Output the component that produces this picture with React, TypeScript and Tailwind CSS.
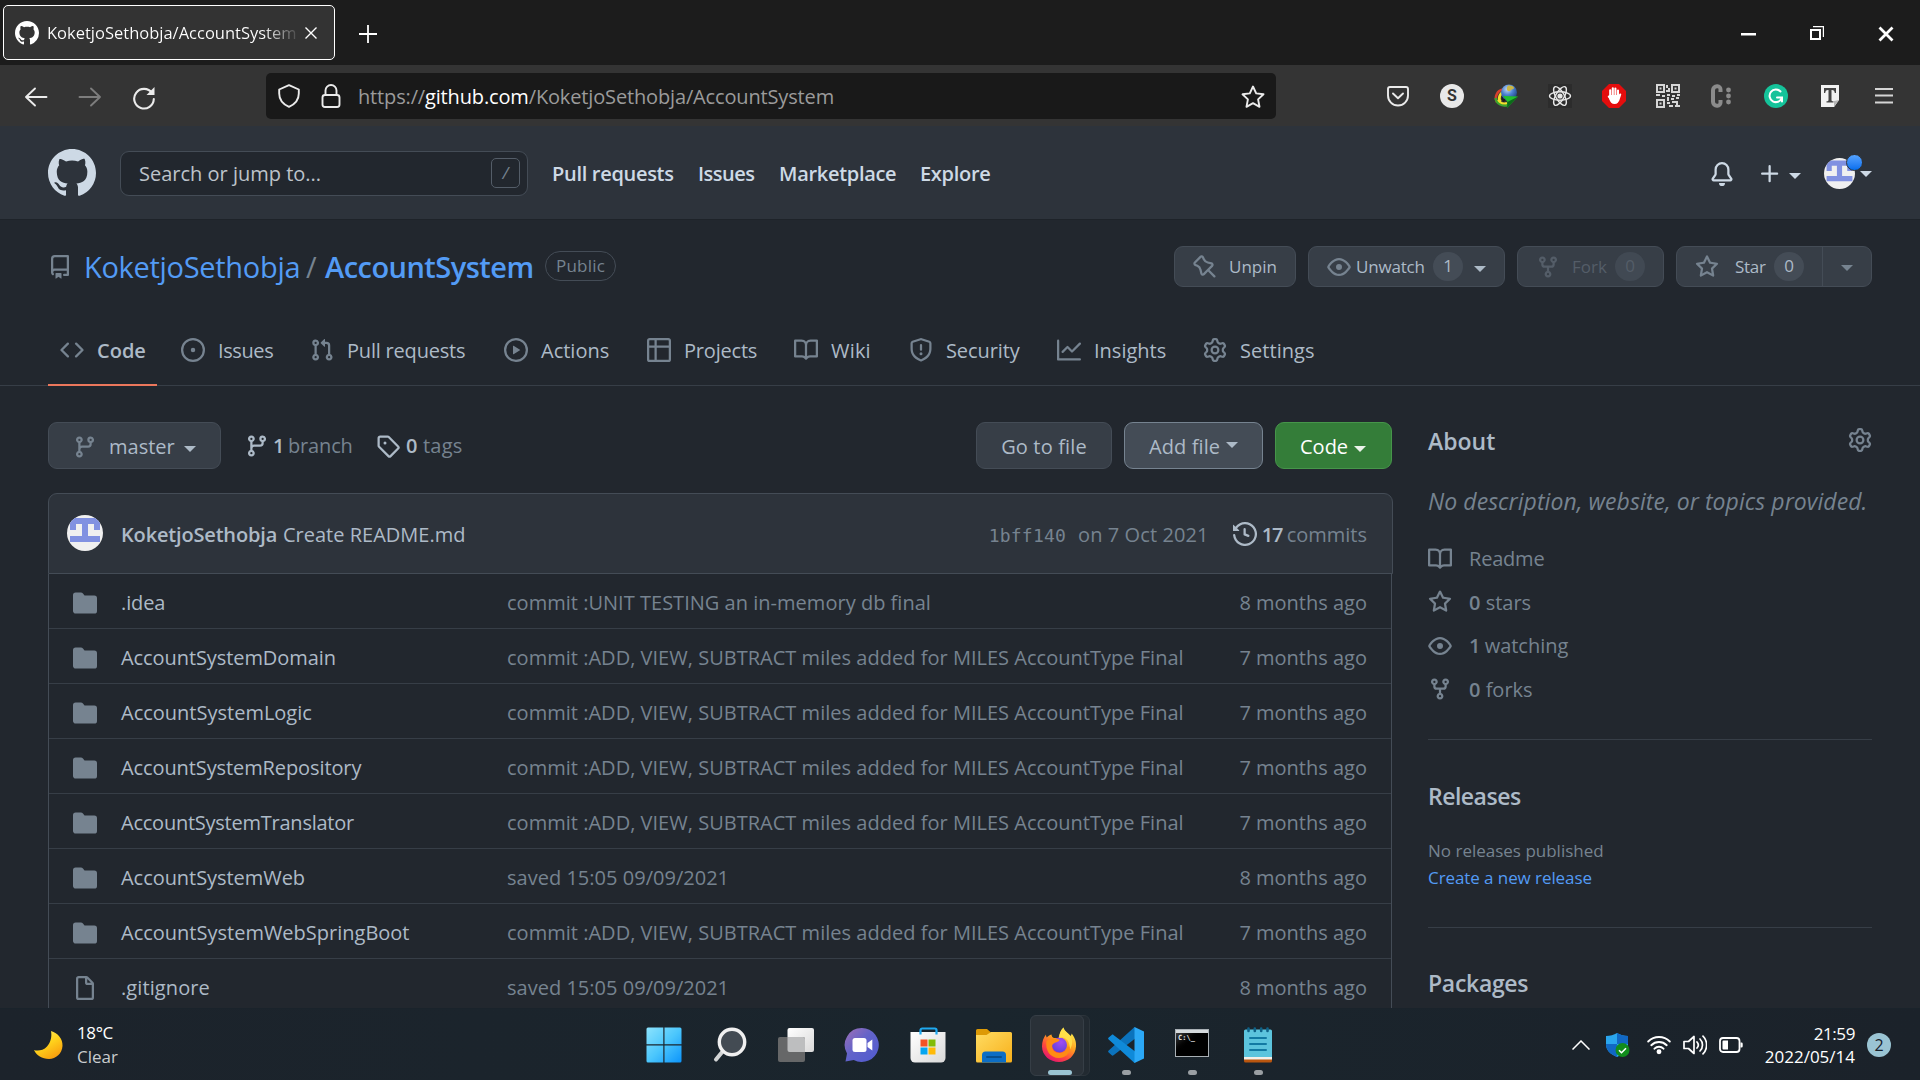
import type { ReactNode } from 'react'

const ICONS = {
  github:
    'M8 0C3.58 0 0 3.58 0 8c0 3.54 2.29 6.53 5.47 7.59.4.07.55-.17.55-.38 0-.19-.01-.82-.01-1.49-2.01.37-2.53-.49-2.69-.94-.09-.23-.48-.94-.82-1.13-.28-.15-.68-.52-.01-.53.63-.01 1.08.58 1.23.82.72 1.21 1.87.87 2.33.66.07-.52.28-.87.51-1.07-1.78-.2-3.64-.89-3.64-3.95 0-.87.31-1.59.82-2.15-.08-.2-.36-1.02.08-2.12 0 0 .67-.21 2.2.82.64-.18 1.32-.27 2-.27.68 0 1.36.09 2 .27 1.53-1.04 2.2-.82 2.2-.82.44 1.1.16 1.92.08 2.12.51.56.82 1.27.82 2.15 0 3.07-1.87 3.75-3.65 3.95.29.25.54.73.54 1.48 0 1.07-.01 1.93-.01 2.2 0 .21.15.46.55.38A8.013 8.013 0 0016 8c0-4.42-3.58-8-8-8z',
  repo: 'M2 2.5A2.5 2.5 0 014.5 0h8.75a.75.75 0 01.75.75v12.5a.75.75 0 01-.75.75h-2.5a.75.75 0 110-1.5h1.75v-2h-8a1 1 0 00-.714 1.7.75.75 0 01-1.072 1.05A2.495 2.495 0 012 11.5v-9zm10.5-1V9h-8c-.356 0-.694.074-1 .208V2.5a1 1 0 011-1h8zM5 12.25v3.25a.25.25 0 00.4.2l1.45-1.087a.25.25 0 01.3 0L8.6 15.7a.25.25 0 00.4-.2v-3.25a.25.25 0 00-.25-.25h-3.5a.25.25 0 00-.25.25z',
  pin: 'M4.456.734a1.75 1.75 0 012.826.504l.613 1.327a3.081 3.081 0 002.084 1.707l2.454.584c1.332.317 1.8 1.972.832 2.94L11.06 10l3.72 3.72a.75.75 0 11-1.061 1.06L10 11.06l-2.204 2.205c-.968.968-2.623.5-2.94-.832l-.584-2.454a3.081 3.081 0 00-1.707-2.084l-1.327-.613a1.75 1.75 0 01-.504-2.826L4.456.734zM5.92 1.866a.25.25 0 00-.404-.072L1.794 5.516a.25.25 0 00.072.404l1.328.613A4.582 4.582 0 015.73 9.63l.584 2.454a.25.25 0 00.42.12l5.47-5.47a.25.25 0 00-.12-.42L9.63 5.73a4.581 4.581 0 01-3.098-2.537L5.92 1.866z',
  eye: 'M1.679 7.932c.412-.621 1.242-1.75 2.366-2.717C5.175 4.242 6.527 3.5 8 3.5c1.473 0 2.824.742 3.955 1.715 1.124.967 1.954 2.096 2.366 2.717a.119.119 0 010 .136c-.412.621-1.242 1.75-2.366 2.717C10.825 11.758 9.473 12.5 8 12.5c-1.473 0-2.824-.742-3.955-1.715C2.92 9.818 2.09 8.69 1.679 8.068a.119.119 0 010-.136zM8 2c-1.981 0-3.67.992-4.933 2.078C1.797 5.169.88 6.423.43 7.1a1.619 1.619 0 000 1.798c.45.678 1.367 1.932 2.637 3.024C4.329 13.008 6.019 14 8 14c1.981 0 3.67-.992 4.933-2.078 1.27-1.091 2.187-2.345 2.637-3.023a1.619 1.619 0 000-1.798c-.45-.678-1.367-1.932-2.637-3.023C11.671 2.992 9.981 2 8 2zm0 8a2 2 0 100-4 2 2 0 000 4z',
  fork: 'M5 3.25a.75.75 0 11-1.5 0 .75.75 0 011.5 0zm0 2.122a2.25 2.25 0 10-1.5 0v.878A2.25 2.25 0 005.75 8.5h1.5v2.128a2.251 2.251 0 101.5 0V8.5h1.5a2.25 2.25 0 002.25-2.25v-.878a2.25 2.25 0 10-1.5 0v.878a.75.75 0 01-.75.75h-4.5A.75.75 0 015 6.25v-.878zm3.75 7.378a.75.75 0 11-1.5 0 .75.75 0 011.5 0zm3-8.75a.75.75 0 100-1.5.75.75 0 000 1.5z',
  star: 'M8 .25a.75.75 0 01.673.418l1.882 3.815 4.21.612a.75.75 0 01.416 1.279l-3.046 2.97.719 4.192a.75.75 0 01-1.088.791L8 12.347l-3.766 1.98a.75.75 0 01-1.088-.79l.72-4.194L.818 6.374a.75.75 0 01.416-1.28l4.21-.611L7.327.668A.75.75 0 018 .25zm0 2.445L6.615 5.5a.75.75 0 01-.564.41l-3.097.45 2.24 2.184a.75.75 0 01.216.664l-.528 3.084 2.769-1.456a.75.75 0 01.698 0l2.77 1.456-.53-3.084a.75.75 0 01.216-.664l2.24-2.183-3.096-.45a.75.75 0 01-.564-.41L8 2.694v.001z',
  code: 'M4.72 3.22a.75.75 0 011.06 1.06L2.06 8l3.72 3.72a.75.75 0 11-1.06 1.06L.47 8.53a.75.75 0 010-1.06l4.25-4.25zm6.56 0a.75.75 0 10-1.06 1.06L13.94 8l-3.72 3.72a.75.75 0 101.06 1.06l4.25-4.25a.75.75 0 000-1.06l-4.25-4.25z',
  issue:
    'M8 9.5a1.5 1.5 0 100-3 1.5 1.5 0 000 3zM8 0a8 8 0 100 16A8 8 0 008 0zM1.5 8a6.5 6.5 0 1113 0 6.5 6.5 0 01-13 0z',
  pull: 'M7.177 3.073L9.573.677A.25.25 0 0110 .854v4.792a.25.25 0 01-.427.177L7.177 3.427a.25.25 0 010-.354zM3.75 2.5a.75.75 0 100 1.5.75.75 0 000-1.5zm-2.25.75a2.25 2.25 0 113 2.122v5.256a2.251 2.251 0 11-1.5 0V5.372A2.25 2.25 0 011.5 3.25zM11 2.5h-1V4h1a1 1 0 011 1v5.628a2.251 2.251 0 101.5 0V5A2.5 2.5 0 0011 2.5zm1 10.25a.75.75 0 111.5 0 .75.75 0 01-1.5 0zM3.75 12a.75.75 0 100 1.5.75.75 0 000-1.5z',
  play: 'M1.5 8a6.5 6.5 0 1113 0 6.5 6.5 0 01-13 0zM8 0a8 8 0 100 16A8 8 0 008 0zM6.379 5.227A.25.25 0 006 5.442v5.117a.25.25 0 00.379.214l4.264-2.559a.25.25 0 000-.428L6.379 5.227z',
  table:
    'M0 1.75C0 .784.784 0 1.75 0h12.5C15.216 0 16 .784 16 1.75v12.5A1.75 1.75 0 0114.25 16H1.75A1.75 1.75 0 010 14.25V1.75zM6.5 6.5v8h7.75a.25.25 0 00.25-.25V6.5h-8zm8-1.5V1.75a.25.25 0 00-.25-.25H6.5V5h8zm-13 1.5v7.75c0 .138.112.25.25.25H5v-8H1.5zM5 5V1.5H1.75a.25.25 0 00-.25.25V5H5z',
  book: 'M0 1.75A.75.75 0 01.75 1h4.253c1.227 0 2.317.59 3 1.501A3.744 3.744 0 0111.006 1h4.245a.75.75 0 01.75.75v10.5a.75.75 0 01-.75.75h-4.507a2.25 2.25 0 00-1.591.659l-.622.621a.75.75 0 01-1.06 0l-.622-.621A2.25 2.25 0 005.258 13H.75a.75.75 0 01-.75-.75V1.75zm8.755 3a2.25 2.25 0 012.25-2.25H14.5v9h-3.757c-.71 0-1.4.201-1.992.572l.004-7.322zm-1.504 7.324l.004-5.073-.002-2.253A2.25 2.25 0 005.003 2.5H1.5v9h3.757a3.75 3.75 0 011.994.574z',
  shield:
    'M7.467.133a1.75 1.75 0 011.066 0l5.25 1.68A1.75 1.75 0 0115 3.48V7c0 1.566-.32 3.182-1.303 4.682-.983 1.498-2.585 2.813-5.032 3.855a1.7 1.7 0 01-1.33 0c-2.447-1.042-4.049-2.357-5.032-3.855C1.32 10.182 1 8.566 1 7V3.48a1.75 1.75 0 011.217-1.667l5.25-1.68zm.61 1.429a.25.25 0 00-.153 0l-5.25 1.68a.25.25 0 00-.174.238V7c0 1.358.275 2.666 1.057 3.86.784 1.194 2.121 2.34 4.366 3.297a.2.2 0 00.154 0c2.245-.956 3.582-2.104 4.366-3.298C13.225 9.666 13.5 8.36 13.5 7V3.48a.25.25 0 00-.174-.237l-5.25-1.68zM9 10.5a1 1 0 11-2 0 1 1 0 012 0zm-.25-5.75a.75.75 0 10-1.5 0v3a.75.75 0 001.5 0v-3z',
  graph:
    'M1.5 1.75a.75.75 0 00-1.5 0v12.5c0 .414.336.75.75.75h14.5a.75.75 0 000-1.5H1.5V1.75zm14.28 2.53a.75.75 0 00-1.06-1.06L10 7.94 7.53 5.47a.75.75 0 00-1.06 0L3.22 8.72a.75.75 0 001.06 1.06L7 7.06l2.47 2.47a.75.75 0 001.06 0l5.25-5.25z',
  gear: 'M7.429 1.525a6.593 6.593 0 011.142 0c.036.003.108.036.137.146l.289 1.105c.147.56.55.967.997 1.189.174.086.341.183.501.29.417.278.97.423 1.53.27l1.102-.303c.11-.03.175.016.195.046.219.31.41.641.573.989.014.031.022.11-.059.19l-.815.806c-.411.406-.562.957-.53 1.456a4.588 4.588 0 010 .582c-.032.499.119 1.05.53 1.456l.815.806c.08.08.073.159.059.19a6.494 6.494 0 01-.573.99c-.02.029-.086.074-.195.045l-1.103-.303c-.559-.153-1.112-.008-1.529.27-.16.107-.327.204-.5.29-.449.222-.851.628-.998 1.189l-.289 1.105c-.029.11-.101.143-.137.146a6.613 6.613 0 01-1.142 0c-.036-.003-.108-.037-.137-.146l-.289-1.105c-.147-.56-.55-.967-.997-1.189a4.502 4.502 0 01-.501-.29c-.417-.278-.97-.423-1.53-.27l-1.102.303c-.11.03-.175-.016-.195-.046a6.492 6.492 0 01-.573-.989c-.014-.031-.022-.11.059-.19l.815-.806c.411-.406.562-.957.53-1.456a4.587 4.587 0 010-.582c.032-.499-.119-1.05-.53-1.456l-.815-.806c-.08-.08-.073-.159-.059-.19a6.44 6.44 0 01.573-.99c.02-.029.086-.075.195-.045l1.103.303c.559.153 1.112.008 1.529-.27.16-.107.327-.204.5-.29.449-.222.851-.628.998-1.189l.289-1.105c.029-.11.101-.143.137-.146zM8 0c-.236 0-.47.01-.701.03-.743.065-1.29.615-1.458 1.261l-.29 1.106c-.017.066-.078.158-.211.224a5.994 5.994 0 00-.668.386c-.123.082-.233.09-.3.071L3.27 2.776c-.644-.177-1.392.02-1.82.63a7.977 7.977 0 00-.704 1.217c-.315.675-.111 1.422.363 1.891l.815.806c.05.048.098.147.088.294a6.084 6.084 0 000 .772c.01.147-.038.246-.088.294l-.815.806c-.474.469-.678 1.216-.363 1.891.2.428.436.835.704 1.218.428.609 1.176.806 1.82.63l1.103-.303c.066-.019.176-.011.299.071.213.143.436.272.668.386.133.066.194.158.212.224l.289 1.106c.169.646.715 1.196 1.458 1.26a8.094 8.094 0 001.402 0c.743-.064 1.29-.614 1.458-1.26l.29-1.106c.017-.066.078-.158.211-.224a5.98 5.98 0 00.668-.386c.123-.082.233-.09.3-.071l1.102.302c.644.177 1.392-.02 1.82-.63.268-.382.505-.789.704-1.217.315-.675.111-1.422-.364-1.891l-.814-.806c-.05-.048-.098-.147-.088-.294a6.1 6.1 0 000-.772c-.01-.147.039-.246.088-.294l.814-.806c.475-.469.679-1.216.364-1.891a7.992 7.992 0 00-.704-1.218c-.428-.609-1.176-.806-1.82-.63l-1.103.303c-.066.019-.176.011-.299-.071a5.991 5.991 0 00-.668-.386c-.133-.066-.194-.158-.212-.224L10.16 1.29C9.99.645 9.444.095 8.701.031A8.094 8.094 0 008 0zm1.5 8a1.5 1.5 0 11-3 0 1.5 1.5 0 013 0zM11 8a3 3 0 11-6 0 3 3 0 016 0z',
  branch:
    'M11.75 2.5a.75.75 0 100 1.5.75.75 0 000-1.5zm-2.25.75a2.25 2.25 0 113 2.122V6A2.5 2.5 0 0110 8.5H6a1 1 0 00-1 1v1.128a2.251 2.251 0 11-1.5 0V5.372a2.25 2.25 0 111.5 0v1.836A2.492 2.492 0 016 7h4a1 1 0 001-1v-.628A2.25 2.25 0 019.5 3.25zM4.25 12a.75.75 0 100 1.5.75.75 0 000-1.5zM3.5 3.25a.75.75 0 111.5 0 .75.75 0 01-1.5 0z',
  tag: 'M2.5 7.775V2.75a.25.25 0 01.25-.25h5.025a.25.25 0 01.177.073l6.25 6.25a.25.25 0 010 .354l-5.025 5.025a.25.25 0 01-.354 0l-6.25-6.25a.25.25 0 01-.073-.177zm-1.5 0V2.75C1 1.784 1.784 1 2.75 1h5.025c.464 0 .91.184 1.238.513l6.25 6.25a1.75 1.75 0 010 2.474l-5.026 5.026a1.75 1.75 0 01-2.474 0l-6.25-6.25A1.75 1.75 0 011 7.775zM6 5a1 1 0 100 2 1 1 0 000-2z',
  history:
    'M1.643 3.143L.427 1.927A.25.25 0 000 2.104V5.75c0 .138.112.25.25.25h3.646a.25.25 0 00.177-.427L2.715 4.215a6.5 6.5 0 11-1.18 4.458.75.75 0 10-1.493.154 8.001 8.001 0 101.6-5.684zM7.75 4a.75.75 0 01.75.75v2.992l2.028.812a.75.75 0 01-.557 1.392l-2.5-1A.75.75 0 017 8.25v-3.5A.75.75 0 017.75 4z',
  folder:
    'M1.75 1A1.75 1.75 0 000 2.75v10.5C0 14.216.784 15 1.75 15h12.5A1.75 1.75 0 0016 13.25v-8.5A1.75 1.75 0 0014.25 3h-6.5a.25.25 0 01-.2-.1l-.9-1.2c-.33-.44-.85-.7-1.4-.7h-3.5z',
  file: 'M3.75 1.5a.25.25 0 00-.25.25v12.5c0 .138.112.25.25.25h8.5a.25.25 0 00.25-.25V6H9.75A1.75 1.75 0 018 4.25V1.5H3.75zm5.75.56v2.19c0 .138.112.25.25.25h2.19L9.5 2.06zM2 1.75C2 .784 2.784 0 3.75 0h5.086c.464 0 .909.184 1.237.513l3.414 3.414c.329.328.513.773.513 1.237v9.086A1.75 1.75 0 0112.25 16h-8.5A1.75 1.75 0 012 14.25V1.75z',
  bell: 'M8 16a2 2 0 001.985-1.75c.017-.137-.097-.25-.235-.25h-3.5c-.138 0-.252.113-.235.25A2 2 0 008 16zM8 1.5A3.5 3.5 0 004.5 5v2.947c0 .346-.102.683-.294.97l-1.703 2.556a.018.018 0 00-.003.01l.001.006c0 .002.002.004.004.006a.017.017 0 00.006.004l.007.001h10.964l.007-.001a.016.016 0 00.006-.004.016.016 0 00.004-.006l.001-.007a.017.017 0 00-.003-.01l-1.703-2.554a1.75 1.75 0 01-.294-.97V5A3.5 3.5 0 008 1.5zM3 5a5 5 0 0110 0v2.947c0 .05.015.098.042.139l1.703 2.555A1.518 1.518 0 0113.482 13H2.518a1.518 1.518 0 01-1.263-2.36l1.703-2.554A.25.25 0 003 7.947V5z',
  plus: 'M7.75 2a.75.75 0 01.75.75V7h4.25a.75.75 0 010 1.5H8.5v4.25a.75.75 0 01-1.5 0V8.5H2.75a.75.75 0 010-1.5H7V2.75A.75.75 0 017.75 2z',
}

type IconName = keyof typeof ICONS

function Octicon({ name, className = 'size-6 text-[#768390]' }: { name: IconName; className?: string }) {
  return (
    <svg viewBox="0 0 16 16" className={`shrink-0 fill-current ${className}`}>
      <path fillRule="evenodd" d={ICONS[name]} />
    </svg>
  )
}

function Caret({ className = '' }: { className?: string }) {
  return (
    <svg viewBox="0 0 12 6" className={`h-1.5 w-3 shrink-0 fill-current ${className}`}>
      <path d="M0 0h12L6 6z" />
    </svg>
  )
}

function Avatar({ className }: { className: string }) {
  return (
    <svg viewBox="0 0 12 12" className={`shrink-0 rounded-full ${className}`}>
      <path fill="#f0f0f0" d="M0 0h12v12H0z" />
      <path fill="#8191e1" d="M1 1h10v4H9V3H7v4h4v2H1V7h4V3H3v2H1z" />
    </svg>
  )
}

/* ---------- Browser window ---------- */

function TitleBar() {
  return (
    <div className="flex h-[65px] shrink-0 items-center bg-[#1c1c1c] pl-[3px] text-white">
      <div className="flex h-[55px] w-[332px] items-center rounded-[5px] border border-white bg-[#333] pl-[11px]">
        <Octicon name="github" className="size-6 text-white" />
        <div className="ml-2 w-[254px] overflow-hidden bg-gradient-to-r from-white from-85% to-transparent bg-clip-text pt-0.5 text-[16.5px] whitespace-nowrap text-transparent">
          KoketjoSethobja/AccountSystem
        </div>
        <svg viewBox="0 0 12 12" className="ml-1 size-3 stroke-white stroke-[1.4]">
          <path d="M.5.5l11 11M11.5.5L.5 11.5" />
        </svg>
      </div>
      <svg viewBox="0 0 18 18" className="mt-0.5 ml-6 size-[18px] stroke-white stroke-[1.8]">
        <path d="M9 0v18M0 9h18" />
      </svg>
      <div className="ml-auto flex items-center">
        <svg viewBox="0 0 16 16" className="mt-0.5 size-4 fill-white">
          <path d="M0 7h15v2.500H0z" />
        </svg>
        <svg viewBox="0 0 16 16" className="ml-[52px] size-4 fill-none stroke-white">
          <path strokeWidth="2" d="M2 5h9v9H2z" />
          <path strokeWidth="1.2" d="M4 1.6h10.4V12" />
        </svg>
        <svg viewBox="0 0 16 16" className="mt-0.5 mr-[26px] ml-[53px] size-4 stroke-white stroke-[2.8]">
          <path d="M1.5 1.5l13 13M14.5 1.5l-13 13" />
        </svg>
      </div>
    </div>
  )
}

const lineIcon = 'size-6 shrink-0 fill-none stroke-[#ebebeb] stroke-[1.9]'

function Extensions() {
  return (
    <div className="ml-auto flex items-center gap-[30px] pr-6">
      <svg viewBox="0 0 24 24" className={lineIcon} strokeLinejoin="round" strokeLinecap="round">
        <path d="M4 3h16a2 2 0 0 1 2 2v6.500a10 10 0 0 1-20 0V5a2 2 0 0 1 2-2z" />
        <path d="M7 9.500l5 4.800 5-4.800" />
      </svg>
      <div className="flex size-6 items-center justify-center rounded-full bg-[#e8e8e8] font-[Roboto] text-base font-bold text-[#333]">
        S
      </div>
      <svg viewBox="0 0 24 24" className="size-6">
        <defs>
          <radialGradient id="globe" cx=".4" cy=".3" r=".8">
            <stop offset="0" stopColor="#c3daf7" />
            <stop offset=".45" stopColor="#4a80cf" />
            <stop offset="1" stopColor="#17356f" />
          </radialGradient>
        </defs>
        <g fill="none">
          <path d="M9 5.500A8.500 8.500 0 0 0 3 18" stroke="#d8402c" strokeWidth="2.600" />
          <path d="M10 8a6.500 6.500 0 0 0-3.500 10" stroke="#f3e22b" strokeWidth="2.800" />
          <path d="M10.500 11a4 4 0 0 0 0 6" stroke="#1c1c1c" strokeWidth="3" />
          <path d="M1.500 14a9 9 0 0 0 12 7" stroke="#3da52f" strokeWidth="2.400" />
          <path d="M4 16a8 8 0 0 0 9 3" stroke="#f3e22b" strokeWidth="2" />
        </g>
        <circle cx="15" cy="8.500" r="8" fill="url(#globe)" />
        <path d="M14 1.500c4-.500 6 1 6 2.500s-3 1-3.500 2.500-3 .500-3.500-.500 0-3.500 1-4.500z" fill="#c9b646" />
        <path d="M9 12l15 .500-11 11.500.500-6z" fill="#22c02d" />
        <path d="M24 12.500L13 24l.5-6z" fill="#0c6b1a" />
      </svg>
      <svg viewBox="0 0 24 24" className="size-6 bg-[#2c2c2c] fill-none stroke-[#e8e8e8] stroke-[1.4]">
        <ellipse cx="12" cy="12" rx="10.500" ry="4.200" />
        <ellipse cx="12" cy="12" rx="10.500" ry="4.200" transform="rotate(60 12 12)" />
        <ellipse cx="12" cy="12" rx="10.500" ry="4.200" transform="rotate(120 12 12)" />
        <circle cx="12" cy="12" r="1.900" className="fill-[#e8e8e8]" />
      </svg>
      <svg viewBox="0 0 24 24" className="size-6">
        <path fill="#e40d0d" d="M7 0h10l7 7v10l-7 7H7l-7-7V7z" />
        <g stroke="#fff" strokeWidth="2.100" strokeLinecap="round" fill="none">
          <path d="M8.200 13V6.200M10.800 12V4.200M13.400 12V4.600M16 13V6.600M6.800 12.500l3.200 4M18.200 10.500l-2 6" />
        </g>
        <path fill="#fff" d="M7.200 11h9.900v4c0 3-1.800 5-4.500 5S8 18 7.200 15z" />
      </svg>
      <svg viewBox="0 0 24 24" className="size-6 fill-none stroke-[#d6d6d6] stroke-2">
        <path d="M1 1h7v7H1zM16 1h7v7h-7zM1 16h7v7H1z" />
        <path d="M3.500 4.500h2M18.500 4.500h2M3.500 19.500h2M11 1v3M13 4v4M10 7h2M0 11h4M6 12h3M11 11h3M16 12h3M21 11h3M12 13v4M15 15h3M20 14h3M11 19h3M16 18h4M21 17v4M13 22h4M19 22h5" />
      </svg>
      <svg viewBox="0 0 24 24" className="size-6 fill-none stroke-[#8b8b8b]">
        <path strokeWidth="4" d="M10.500 8V5.500a3 3 0 0 0-3-3.200h-.500a4 4 0 0 0-4 4v11.400a4 4 0 0 0 4 4h.500a3 3 0 0 0 3-3.200V16" />
        <g className="fill-[#8b8b8b] stroke-none">
          <circle cx="18.500" cy="6" r="2.400" />
          <circle cx="18.500" cy="12" r="2.400" />
          <circle cx="18.500" cy="18" r="2.400" />
        </g>
      </svg>
      <svg viewBox="0 0 24 24" className="size-6 fill-none stroke-white">
        <circle cx="12" cy="12" r="12" fill="#15c39a" stroke="none" />
        <path strokeWidth="2" strokeLinecap="round" d="M16.500 7.500A6.300 6.300 0 1 0 17.800 14M13 13.500h5v4" />
      </svg>
      <svg viewBox="0 0 24 24" className="size-6">
        <path fill="#f2f2f2" d="M3 1h18v15l-5 7H3z" />
        <path fill="#b5b5b5" d="M21 16l-5 7v-6z" />
        <path fill="#444" d="M6 4h12v5h-1.200c-.300-2-.800-3-2.800-3h-.500v10c0 1 .500 1.300 2 1.300V18.500H8.500v-1.200c1.500 0 2-.300 2-1.300V6H10c-2 0-2.500 1-2.800 3H6z" />
      </svg>
      <svg viewBox="0 0 24 24" className="size-6 stroke-[#d5d5d5] stroke-[1.8]">
        <path d="M3 5h18M3 11.500h18M3 18.500h18" />
      </svg>
    </div>
  )
}

function Toolbar() {
  return (
    <div className="flex h-[61px] shrink-0 items-center bg-[#343434] pl-6">
      <svg viewBox="0 0 24 24" className={`${lineIcon} mt-0.5`} strokeLinecap="round" strokeLinejoin="round">
        <path d="M22.500 12H2M11 3.500L2 12l9 8.500" />
      </svg>
      <svg
        viewBox="0 0 24 24"
        className="mt-0.5 ml-[30px] size-6 fill-none stroke-[#7d7d7d] stroke-[1.9]"
        strokeLinecap="round"
        strokeLinejoin="round"
      >
        <path d="M1.500 12H22M13 3.500l9 8.500-9 8.500" />
      </svg>
      <svg viewBox="0 0 24 24" className="mt-1 ml-[30px] size-6 fill-none stroke-[#ebebeb] stroke-[2.1]">
        <path strokeLinecap="round" d="M20 7A9.800 9.800 0 1 0 21.800 13" />
        <path className="fill-[#ebebeb] stroke-none" d="M22.500 1v8h-8z" />
      </svg>
      <div className="ml-[110px] flex h-[46px] w-[1010px] items-center rounded-[5px] bg-[#191919] pl-[11px]">
        <svg viewBox="0 0 24 24" className={lineIcon} strokeLinejoin="round">
          <path d="M12 1.200l9.800 4.300v4c0 6-3.300 10.500-9.800 13.300C5.500 20 2.200 15.500 2.200 9.500v-4z" />
        </svg>
        <svg viewBox="0 0 24 24" className={`${lineIcon} ml-[18px]`}>
          <rect x="3.500" y="11" width="17" height="12" rx="2.500" />
          <path d="M6.500 11V6.500a5.500 5.500 0 0 1 11 0V11" />
        </svg>
        <div className="ml-[15px] pt-[3px] text-[20px] tracking-[-0.15px] whitespace-nowrap text-[#9b9b9b]">
          https://<span className="text-white">github.com</span>/KoketjoSethobja/AccountSystem
        </div>
        <svg viewBox="0 0 24 24" className={`${lineIcon} mt-0.5 mr-[11px] ml-auto`} strokeLinejoin="round">
          <path d="M12 1.500l3.200 6.900 7.300.900-5.400 5.100 1.400 7.400-6.500-3.600-6.500 3.600 1.400-7.400L1.500 9.300l7.300-.900z" />
        </svg>
      </div>
      <Extensions />
    </div>
  )
}

/* ---------- GitHub page ---------- */

function SiteHeader() {
  return (
    <header className="flex h-[94px] shrink-0 items-center border-b border-[#1e2329] bg-[#2d333b] pl-12 text-[#cdd9e5]">
      <Octicon name="github" className="size-12" />
      <div className="mt-px ml-6 flex h-[45px] w-[408px] items-center rounded-[9px] border border-[#444c56] bg-[#22272e] pr-[7px] pl-[18px] text-[20px] text-[#bdc3ca]">
        <span className="pt-0.5">Search or jump to...</span>
        <span className="ml-auto flex h-[30px] w-[29px] items-center justify-center rounded-[5px] border border-[#545d68] text-[17px] text-[#768390] italic">
          /
        </span>
      </div>
      <nav className="ml-6 flex pt-[3px] text-[20px] font-semibold tracking-[-0.3px]">
        <a className="w-[146px]">Pull requests</a>
        <a className="w-[81px] tracking-[-0.5px]">Issues</a>
        <a className="w-[141px]">Marketplace</a>
        <a>Explore</a>
      </nav>
      <div className="ml-auto flex items-center pt-0.5 pr-12">
        <Octicon name="bell" className="size-6" />
        <Octicon name="plus" className="ml-6 size-6" />
        <Caret className="mt-1 ml-[7px]" />
        <div className="relative ml-[23px]">
          <Avatar className="size-[31px]" />
          <span className="absolute -top-1 left-[22px] size-[17px] rounded-full border border-[#2d333b] bg-gradient-to-b from-[#54a3ff] to-[#006eed]" />
        </div>
        <Caret className="ml-[5px]" />
      </div>
    </header>
  )
}

const actionButton = 'flex h-[41px] items-center rounded-[9px] border border-[#444c56] bg-[#373e47] text-[17px]'

function Count({ children, dim }: { children: ReactNode; dim?: boolean }) {
  return (
    <span className={`flex h-[29px] w-[30px] items-center justify-center rounded-full ${dim ? 'bg-[#414953]' : 'bg-[#444c56]'}`}>
      <span className="-mt-px">{children}</span>
    </span>
  )
}

function RepoHeading() {
  return (
    <div className="flex h-[93px] items-center px-12">
      <Octicon name="repo" className="size-6 text-[#768390]" />
      <h1 className="ml-3 flex items-center text-[29px] tracking-[-0.3px] text-[#539bf5]">
        <span className="w-[222px]">KoketjoSethobja</span>
        <span className="w-[19px] text-[#768390]">/</span>
        <span className="w-[220px] font-semibold tracking-[-0.53px]">AccountSystem</span>
      </h1>
      <span className="-mt-0.5 flex h-[30px] w-[71px] items-center justify-center rounded-full border border-[#444c56] text-[17px] tracking-[0.2px] text-[#768390]">
        Public
      </span>
      <div className="ml-auto flex gap-3">
        <div className={`${actionButton} w-[122px] pl-[18px] text-[#adbac7]`}>
          <Octicon name="pin" />
          <span className="ml-3 pt-px">Unpin</span>
        </div>
        <div className={`${actionButton} w-[197px] pl-[18px] text-[#adbac7]`}>
          <Octicon name="eye" />
          <span className="ml-[5px] w-[77px] pt-px tracking-[-0.2px]">Unwatch</span>
          <Count>1</Count>
          <Caret className="mt-1 ml-[11px]" />
        </div>
        <div className={`${actionButton} w-[147px] pl-[18px] text-[#545d68]`}>
          <Octicon name="fork" className="size-6 text-[#545d68]" />
          <span className="ml-3 w-[43px] pt-px">Fork</span>
          <Count dim>0</Count>
        </div>
        <div className={`${actionButton} w-[196px] pl-[18px] text-[#adbac7]`}>
          <Octicon name="star" />
          <span className="ml-4 w-[39px] pt-px tracking-[-0.3px]">Star</span>
          <Count>0</Count>
          <span className="ml-[18px] flex h-full w-[49px] items-center justify-center border-l border-[#444c56] text-[#768390]">
            <Caret className="mt-0.5" />
          </span>
        </div>
      </div>
    </div>
  )
}

const tabs: { label: string; icon: IconName; width: string }[] = [
  { label: 'Code', icon: 'code', width: 'w-[109px]' },
  { label: 'Issues', icon: 'issue', width: 'w-[117px] tracking-[-0.4px]' },
  { label: 'Pull requests', icon: 'pull', width: 'w-[182px] tracking-[-0.2px]' },
  { label: 'Actions', icon: 'play', width: 'w-[131px]' },
  { label: 'Projects', icon: 'table', width: 'w-[135px] tracking-[-0.2px]' },
  { label: 'Wiki', icon: 'book', width: 'w-[103px] tracking-[0.2px]' },
  { label: 'Security', icon: 'shield', width: 'w-[136px] tracking-[-0.1px]' },
  { label: 'Insights', icon: 'graph', width: 'w-[134px]' },
  { label: 'Settings', icon: 'gear', width: 'w-[140px] tracking-[0.05px]' },
]

function RepoTabs() {
  return (
    <nav className="flex h-[73px] gap-3 border-b border-[#373e47] px-12 text-[20px] text-[#adbac7]">
      {tabs.map((tab, i) => (
        <div
          key={tab.label}
          className={`-mb-px flex items-center gap-[13px] border-b-2 pt-0.5 pl-3 whitespace-nowrap ${tab.width} ${
            i === 0 ? 'border-[#ec775c] font-semibold' : 'border-transparent'
          }`}
        >
          <Octicon name={tab.icon} />
          <span className="pt-[3px]">{tab.label}</span>
        </div>
      ))}
    </nav>
  )
}

const fileButton = 'flex h-[47px] items-center rounded-[9px] border pt-0.5 text-[20px]'

function FileNavigation() {
  return (
    <div className="mr-px flex h-[47px] items-center text-[20px] text-[#768390]">
      <div className={`${fileButton} w-[173px] border-[#444c56] bg-[#373e47] pl-6 text-[#adbac7]`}>
        <Octicon name="branch" />
        <span className="ml-3 w-[75px]">master</span>
        <Caret className="mt-1" />
      </div>
      <Octicon name="branch" className="ml-6 size-6 text-[#adbac7]" />
      <span className="ml-1 w-[15px] font-semibold text-[#adbac7]">1</span>
      <span className="w-[88px] tracking-[-0.15px]">branch</span>
      <Octicon name="tag" className="size-6 text-[#adbac7]" />
      <span className="ml-[6px] w-[17px] font-semibold text-[#adbac7]">0</span>
      <span className="tracking-[0.2px]">tags</span>
      <div className="ml-auto flex gap-3">
        <div className={`${fileButton} w-[136px] justify-center border-[#444c56] bg-[#373e47] tracking-[0.15px] text-[#adbac7]`}>
          Go to file
        </div>
        <div className={`${fileButton} w-[139px] border-[#768390] bg-[#444c56] pl-6 text-[#adbac7]`}>
          <span className="w-[77px] tracking-[0.1px]">Add file</span>
          <Caret className="-mt-1" />
        </div>
        <div className={`${fileButton} w-[117px] border-[#46954a] bg-[#347d39] pl-6 text-white`}>
          <span className="w-[54px] font-medium">Code</span>
          <Caret className="mt-1 opacity-90" />
        </div>
      </div>
    </div>
  )
}

const LONG = 'commit :ADD, VIEW, SUBTRACT miles added for MILES AccountType Final'

const files = [
  { name: '.idea', message: 'commit :UNIT TESTING an in-memory db final', age: '8 months ago', track: 'tracking-[-0.1px]' },
  { name: 'AccountSystemDomain', message: LONG, age: '7 months ago', track: 'tracking-[-0.08px]' },
  { name: 'AccountSystemLogic', message: LONG, age: '7 months ago', track: '' },
  { name: 'AccountSystemRepository', message: LONG, age: '7 months ago', track: 'tracking-[-0.1px]' },
  { name: 'AccountSystemTranslator', message: LONG, age: '7 months ago', track: 'tracking-[-0.24px]' },
  { name: 'AccountSystemWeb', message: 'saved 15:05 09/09/2021', age: '8 months ago', track: 'tracking-[-0.05px]' },
  { name: 'AccountSystemWebSpringBoot', message: LONG, age: '7 months ago', track: '' },
  { name: '.gitignore', message: 'saved 15:05 09/09/2021', age: '8 months ago', track: 'tracking-[0.1px]' },
]

function FileTable() {
  return (
    <div className="mt-6 text-[20px] whitespace-nowrap text-[#768390]">
      <div className="flex h-[81px] items-center rounded-t-[9px] border border-[#444c56] bg-[#2d333b] pr-[25px] pl-[18px]">
        <Avatar className="-mt-0.5 size-9" />
        <span className="ml-[18px] w-[162px] pt-0.5 font-semibold tracking-[-0.17px] text-[#adbac7]">KoketjoSethobja</span>
        <span className="pt-0.5 text-[#adbac7]">Create README.md</span>
        <span className="ml-auto pt-[3px] font-['DejaVu_Sans_Mono'] text-[18px] tracking-[0.2px]">1bff140</span>
        <span className="ml-3 pt-0.5 tracking-[0.1px]">on 7 Oct 2021</span>
        <Octicon name="history" className="ml-6 size-6 text-[#adbac7]" />
        <span className="ml-[5px] w-[20px] pt-0.5 font-semibold tracking-[-1px] text-[#adbac7]">17</span>
        <span className="ml-[5px] pt-0.5">commits</span>
      </div>
      <div className="mr-px border-x border-[#444c56]">
        {files.map((file, i) => (
          <div
            key={file.name}
            className={`flex items-center pt-[3px] pr-6 pl-6 ${i === 0 ? 'h-[54px]' : 'h-[55px] border-t border-[#373e47]'}`}
          >
            <Octicon name={file.name === '.gitignore' ? 'file' : 'folder'} />
            <span className={`ml-6 w-[386px] pt-px text-[#adbac7] ${file.track}`}>{file.name}</span>
            <span className="pt-px tracking-[0.02px]">{file.message}</span>
            <span className="ml-auto pt-px">{file.age}</span>
          </div>
        ))}
      </div>
    </div>
  )
}

function SidebarStat({ icon, children }: { icon: IconName; children: ReactNode }) {
  return (
    <li className="flex h-[43.5px] items-center gap-[17px]">
      <Octicon name={icon} />
      <span className="pt-px">{children}</span>
    </li>
  )
}

function Sidebar() {
  return (
    <aside className="ml-[35px] w-[444px] text-[20px] text-[#768390]">
      <div className="flex h-[37px] items-center justify-between">
        <h2 className="pt-0.5 text-[23px] font-semibold text-[#adbac7]">About</h2>
        <Octicon name="gear" className="-mt-0.5 size-6 text-[#768390]" />
      </div>
      <p className="mt-6 h-9 text-[23px] leading-9 tracking-[0.06px] whitespace-nowrap italic">No description, website, or topics provided.</p>
      <ul className="mt-[18px]">
        <SidebarStat icon="book">
          <span className="tracking-[-0.2px]">Readme</span>
        </SidebarStat>
        <SidebarStat icon="star">
          <b className="font-semibold">0</b> stars
        </SidebarStat>
        <SidebarStat icon="eye">
          <b className="font-semibold tracking-[-1px]">1</b> watching
        </SidebarStat>
        <SidebarStat icon="fork">
          <b className="font-semibold">0</b> forks
        </SidebarStat>
      </ul>
      <section className="mt-[28px] border-t border-[#373e47] pt-[38px]">
        <h2 className="h-9 text-[23px] leading-9 font-semibold tracking-[-0.5px] text-[#adbac7]">Releases</h2>
        <p className="mt-[23px] h-[27px] text-[17px] leading-[27px]">No releases published</p>
        <a className="block h-[27px] text-[17px] leading-[27px] tracking-[-0.08px] text-[#539bf5]">Create a new release</a>
      </section>
      <section className="mt-[36px] border-t border-[#373e47] pt-[37px]">
        <h2 className="h-9 text-[23px] leading-9 font-semibold tracking-[-0.3px] text-[#adbac7]">Packages</h2>
      </section>
    </aside>
  )
}

/* ---------- Windows taskbar ---------- */

function TaskButton({ children, running, active }: { children: ReactNode; running?: boolean; active?: boolean }) {
  return (
    <div className="relative flex h-[72px] w-[66px] items-center justify-center">
      {active && (
        <>
          <span className="absolute top-[6px] left-[7px] h-[61px] w-[56px] rounded-md border border-[#2c343b] bg-[#222a31]" />
          <span className="absolute top-[6px] left-[3px] h-[61px] w-[54px] rounded-md border border-[#363e46] bg-[#2a3138]" />
          <span className="absolute bottom-[6px] left-[21px] h-[5px] w-6 rounded-full bg-[#9ac4d3]" />
        </>
      )}
      {running && <span className="absolute bottom-[6px] h-[5px] w-[9px] rounded-full bg-[#9a9fa3]" />}
      <div className="relative">{children}</div>
    </div>
  )
}

function TaskbarApps() {
  return (
    <div className="absolute inset-y-0 left-[631px] flex">
      <svg className="absolute size-0">
        <defs>
          <linearGradient id="win" x1="0" y1="0" x2="36" y2="36" gradientUnits="userSpaceOnUse">
            <stop offset="0" stopColor="#8ee4fd" />
            <stop offset=".5" stopColor="#4cc7fd" />
            <stop offset="1" stopColor="#0a93fb" />
          </linearGradient>
          <linearGradient id="chat" x1="0" y1="0" x2="1" y2="1">
            <stop offset="0" stopColor="#a06fb5" />
            <stop offset=".45" stopColor="#6263c9" />
            <stop offset="1" stopColor="#4f5ad0" />
          </linearGradient>
          <linearGradient id="folder" x1="0" y1="0" x2="1" y2="1">
            <stop offset="0" stopColor="#ffdc62" />
            <stop offset="1" stopColor="#f8b01b" />
          </linearGradient>
          <linearGradient id="fox" x1=".85" y1=".1" x2=".3" y2="1">
            <stop offset="0" stopColor="#fff04f" />
            <stop offset=".4" stopColor="#ffa01f" />
            <stop offset=".7" stopColor="#ff4b3c" />
            <stop offset="1" stopColor="#e4156f" />
          </linearGradient>
          <radialGradient id="orb" cx=".6" cy=".3" r=".8">
            <stop offset="0" stopColor="#a24cf5" />
            <stop offset="1" stopColor="#5b3fd6" />
          </radialGradient>
          <linearGradient id="pane" x1="0" y1="0" x2="1" y2="1">
            <stop offset="0" stopColor="#ffffff" />
            <stop offset="1" stopColor="#d9d9d9" />
          </linearGradient>
        </defs>
      </svg>
      <TaskButton>
        <svg viewBox="0 0 36 36" className="size-9">
          <path fill="url(#win)" d="M2 .500h15.300v16.800H.500V2A1.500 1.500 0 0 1 2 .500zM18.500.500H34A1.500 1.500 0 0 1 35.500 2v15.300h-17zM.500 18.600h16.800v16.900H2A1.500 1.500 0 0 1 .500 34zM18.500 18.600h17V34a1.500 1.500 0 0 1-1.500 1.500H18.500z" />
        </svg>
      </TaskButton>
      <TaskButton>
        <svg viewBox="0 0 36 36" className="size-9">
          <path d="M11 24l-7 8.500" stroke="#d2d4d5" strokeWidth="4" strokeLinecap="round" />
          <circle cx="20" cy="15" r="12.700" fill="#434b53" stroke="#f0f0f0" strokeWidth="3.400" />
        </svg>
      </TaskButton>
      <TaskButton>
        <svg viewBox="0 0 36 36" className="size-9">
          <rect x="9.500" y="1" width="26.500" height="24" rx="2" fill="url(#pane)" />
          <rect x="0" y="10" width="27" height="25" rx="2" fill="#666768" />
          <path fill="#bdbebf" d="M9.500 10H25a2 2 0 0 1 2 2v13H11.500a2 2 0 0 1-2-2z" />
        </svg>
      </TaskButton>
      <TaskButton>
        <svg viewBox="0 0 36 36" className="size-9">
          <path fill="url(#chat)" d="M18 1a17 17 0 1 1-8.200 32L1.500 34.500 3 26.500A17 17 0 0 1 18 1z" />
          <rect x="8.500" y="11" width="14" height="14" rx="2.500" fill="#fff" />
          <path fill="#fff" d="M23.500 16l4.800-3.500v11L23.500 20z" />
        </svg>
      </TaskButton>
      <TaskButton>
        <svg viewBox="0 0 36 36" className="size-9">
          <path d="M10.500 7V3.200A1.700 1.700 0 0 1 12.200 1.500h12.600a1.700 1.700 0 0 1 1.700 1.700V7" fill="none" stroke="#1fa9f0" strokeWidth="2.200" />
          <path fill="url(#pane)" d="M.500 5h35v26a4.500 4.500 0 0 1-4.500 4.500H5A4.500 4.500 0 0 1 .500 31z" />
          <path d="M10.500 7.500V5M26.500 7.500V5" stroke="#1fa9f0" strokeWidth="2.200" />
          <path fill="#f35325" d="M10.500 12.500h7v7h-7z" />
          <path fill="#81bc06" d="M18.500 12.500h7v7h-7z" />
          <path fill="#05a6f0" d="M10.500 20.500h7v7h-7z" />
          <path fill="#ffba08" d="M18.500 20.500h7v7h-7z" />
        </svg>
      </TaskButton>
      <TaskButton>
        <svg viewBox="0 0 36 36" className="size-9">
          <path fill="#dd9a06" d="M0 3.500A1.500 1.500 0 0 1 1.500 2H11l4 3.500L11 9H0z" />
          <path fill="url(#folder)" d="M0 8h10.500L15 5h19.500A1.500 1.500 0 0 1 36 6.500V34a1.500 1.500 0 0 1-1.500 1.500h-33A1.500 1.500 0 0 1 0 34z" />
          <path fill="#0d6ec5" d="M6 35.500V28a3.500 3.500 0 0 1 3.500-3.500h17A3.500 3.500 0 0 1 30 28v7.500z" />
          <path d="M11 30h14" stroke="#084f8e" strokeWidth="2" strokeLinecap="round" />
        </svg>
      </TaskButton>
      <TaskButton active>
        <svg viewBox="0 0 36 36" className="-ml-0.5 size-9">
          <path fill="url(#fox)" d="M22.500.500c.500 3.500 5 5.500 7 8.500.800-.300 1-1.500 1-2.500C33.500 10 35.500 14.500 35 19.500c-.500 9-8 15.500-17 15.500S1 28.500 1 19.500c0-5 1.500-9 4-12 0 1.500.300 2 .800 3C7 9 8.500 8 10.500 7.500c0 1.500 1 3 2.500 3.500h4.500c1-4 2-8 5-10.500z" />
          <circle cx="18.500" cy="18" r="7.500" fill="url(#orb)" />
          <path fill="#ff8c14" d="M5.500 14c3-2.500 6-2.500 8.500-2.500 2 0 4 .500 4.500 1.500-.500 2-4 2-5 3-1 .500-2 1-2.500 3 0 4 3 6.800 7.500 7 4 0 7.500-2.500 8-6.500l3 .500C29 27 24 31 18 31 9 31 4 23 5.500 14z" />
          <path fill="#ffe14a" d="M22.500.500c.500 3.500 5 5.500 7 8.500 2.500 4.500 2 9.500-.500 13.500 0-5-1.500-9-4.500-11-2.500-1.500-4.500-1-6.500-.500.500-4 1.500-8 4.500-10.500z" opacity=".9" />
        </svg>
      </TaskButton>
      <TaskButton running>
        <svg viewBox="0 0 36 36" className="size-9">
          <path fill="#0b73bd" d="M26.500 0L33 7 5.500 28.300c-.600.500-1.300.400-1.800 0L.700 25.500a1.300 1.300 0 0 1 0-2z" />
          <path fill="#0f8ad9" d="M5.500 7.900L33 29l-6.500 7L.700 12.600a1.300 1.300 0 0 1 0-2l3-2.700c.500-.400 1.200-.500 1.800 0z" />
          <path fill="#2ba8f6" d="M26.500 0L36 4.500v27L26.500 36z" />
        </svg>
      </TaskButton>
      <TaskButton running>
        <div className="-mt-1 flex h-[28px] w-[34px] flex-col overflow-hidden border border-[#a9b0b5] bg-gradient-to-br from-[#4c4c4c] via-black via-50% to-black">
          <div className="h-[3px] shrink-0 bg-[#d5dadd]" />
          <span className="pl-0.5 font-['DejaVu_Sans_Mono'] text-[7px] leading-[10px] font-bold text-[#e6e6e6]">C:\_</span>
        </div>
      </TaskButton>
      <TaskButton running>
        <svg viewBox="0 0 36 36" className="size-9">
          <path fill="#b9560f" d="M4 30h28v4a1.500 1.500 0 0 1-1.500 1.500h-25A1.500 1.500 0 0 1 4 34z" />
          <path fill="#f3efe9" d="M4 28h28v4.500H4z" />
          <path fill="#5cc4dd" d="M5.500 2.500h25A1.500 1.500 0 0 1 32 4v26H4V4a1.500 1.500 0 0 1 1.500-1.500z" />
          <path stroke="#127aa3" strokeWidth="2" strokeLinecap="round" d="M10 11h16M10 17h16M10 23h16" />
          <path stroke="#0e6288" strokeWidth="2.600" strokeLinecap="round" d="M8.500 1.500v2.500M14.800 1.500v2.500M21.200 1.500v2.500M27.500 1.500v2.500" />
        </svg>
      </TaskButton>
    </div>
  )
}

function Taskbar() {
  return (
    <footer className="relative flex h-[72px] shrink-0 items-center border-t border-[#1a232b] bg-gradient-to-r from-[#1c232b] via-[#1a252d] to-[#1b222a] text-[17px] leading-6 text-white">
      <svg viewBox="0 0 30 30" className="ml-[33px] size-[30px]">
        <defs>
          <linearGradient id="moon" x1="0" y1="0" x2=".6" y2="1">
            <stop offset="0" stopColor="#fff06a" />
            <stop offset=".55" stopColor="#ffd21c" />
            <stop offset="1" stopColor="#f9a10f" />
          </linearGradient>
        </defs>
        <path fill="url(#moon)" d="M18 1c7 2 12 8 11.500 15-.500 7.500-6.500 13-13.500 13-7 0-12.500-3.500-15-9 3 1 9 1 13-3.500S19 6 18 1z" />
      </svg>
      <div className="ml-3.5 text-[17px]">
        <div className="tracking-[-0.4px]">18°C</div>
        <div className="text-[#c9cccf]">Clear</div>
      </div>
      <TaskbarApps />
      <div className="ml-auto flex items-center pr-[29px]">
        <svg viewBox="0 0 18 10" className="h-2.5 w-[18px] fill-none stroke-white stroke-[1.5]">
          <path d="M.500 9.500L9 1l8.500 8.500" />
        </svg>
        <svg viewBox="0 0 24 24" className="ml-4 size-6">
          <path fill="#2aa6ee" d="M11 0c3 2 7 3 11 3v8c0 6-4 10-11 13C4 21 0 17 0 11V3c4 0 8-1 11-3z" />
          <path fill="#1168c4" d="M0 11h11v13C4 21 0 17 0 11zM11 0c3 2 7 3 11 3v8H11z" />
          <circle cx="16.500" cy="17" r="7" fill="#118c1c" />
          <path d="M13 17.200l2.500 2.500 4.500-4.500" fill="none" stroke="#fff" strokeWidth="1.600" />
        </svg>
        <svg viewBox="0 0 24 24" className="ml-[17px] size-6 fill-none stroke-white stroke-[1.9]" strokeLinecap="round">
          <path d="M1.200 8.500a15.300 15.300 0 0 1 21.600 0M4.300 12.200a11 11 0 0 1 15.400 0M7.500 15.700a6.300 6.300 0 0 1 9 0" />
          <circle cx="12" cy="18.800" r="1.500" className="fill-white" />
        </svg>
        <svg viewBox="0 0 24 24" className="ml-3 size-6 fill-none stroke-white stroke-[1.7]" strokeLinecap="round" strokeLinejoin="round">
          <path d="M1 8.500h4.500L11 3.500v17L5.500 15.500H1zM14 9a4.500 4.500 0 0 1 0 6M17 6a8.500 8.500 0 0 1 0 12M20 3.200a12.500 12.500 0 0 1 0 17.600" />
        </svg>
        <svg viewBox="0 0 24 24" className="ml-3 size-6">
          <rect x="1" y="5" width="19.500" height="14" rx="3" fill="none" stroke="#fff" strokeWidth="1.800" />
          <path fill="#fff" d="M3.500 8.500a1 1 0 0 1 1-1H9v9H4.500a1 1 0 0 1-1-1zM21.500 9.500h1a1.200 1.200 0 0 1 1.200 1.200v2.600a1.200 1.200 0 0 1-1.200 1.200h-1z" />
        </svg>
        <div className="ml-[22px] text-right leading-[23px]">
          <div className="tracking-[-0.4px]">21:59</div>
          <div>2022/05/14</div>
        </div>
        <span className="ml-3 flex size-6 items-center justify-center rounded-full bg-[#9ac4d3] text-base text-[#16202a]">2</span>
      </div>
    </footer>
  )
}

export default function App() {
  return (
    <div className="flex h-[1080px] w-[1920px] flex-col overflow-hidden bg-[#22272e] font-['Open_Sans',sans-serif]">
      <TitleBar />
      <Toolbar />
      <SiteHeader />
      <div className="min-h-0 flex-1 overflow-hidden">
        <RepoHeading />
        <RepoTabs />
        <div className="flex px-12 pt-9">
          <main className="w-[1345px]">
            <FileNavigation />
            <FileTable />
          </main>
          <Sidebar />
        </div>
      </div>
      <Taskbar />
    </div>
  )
}
